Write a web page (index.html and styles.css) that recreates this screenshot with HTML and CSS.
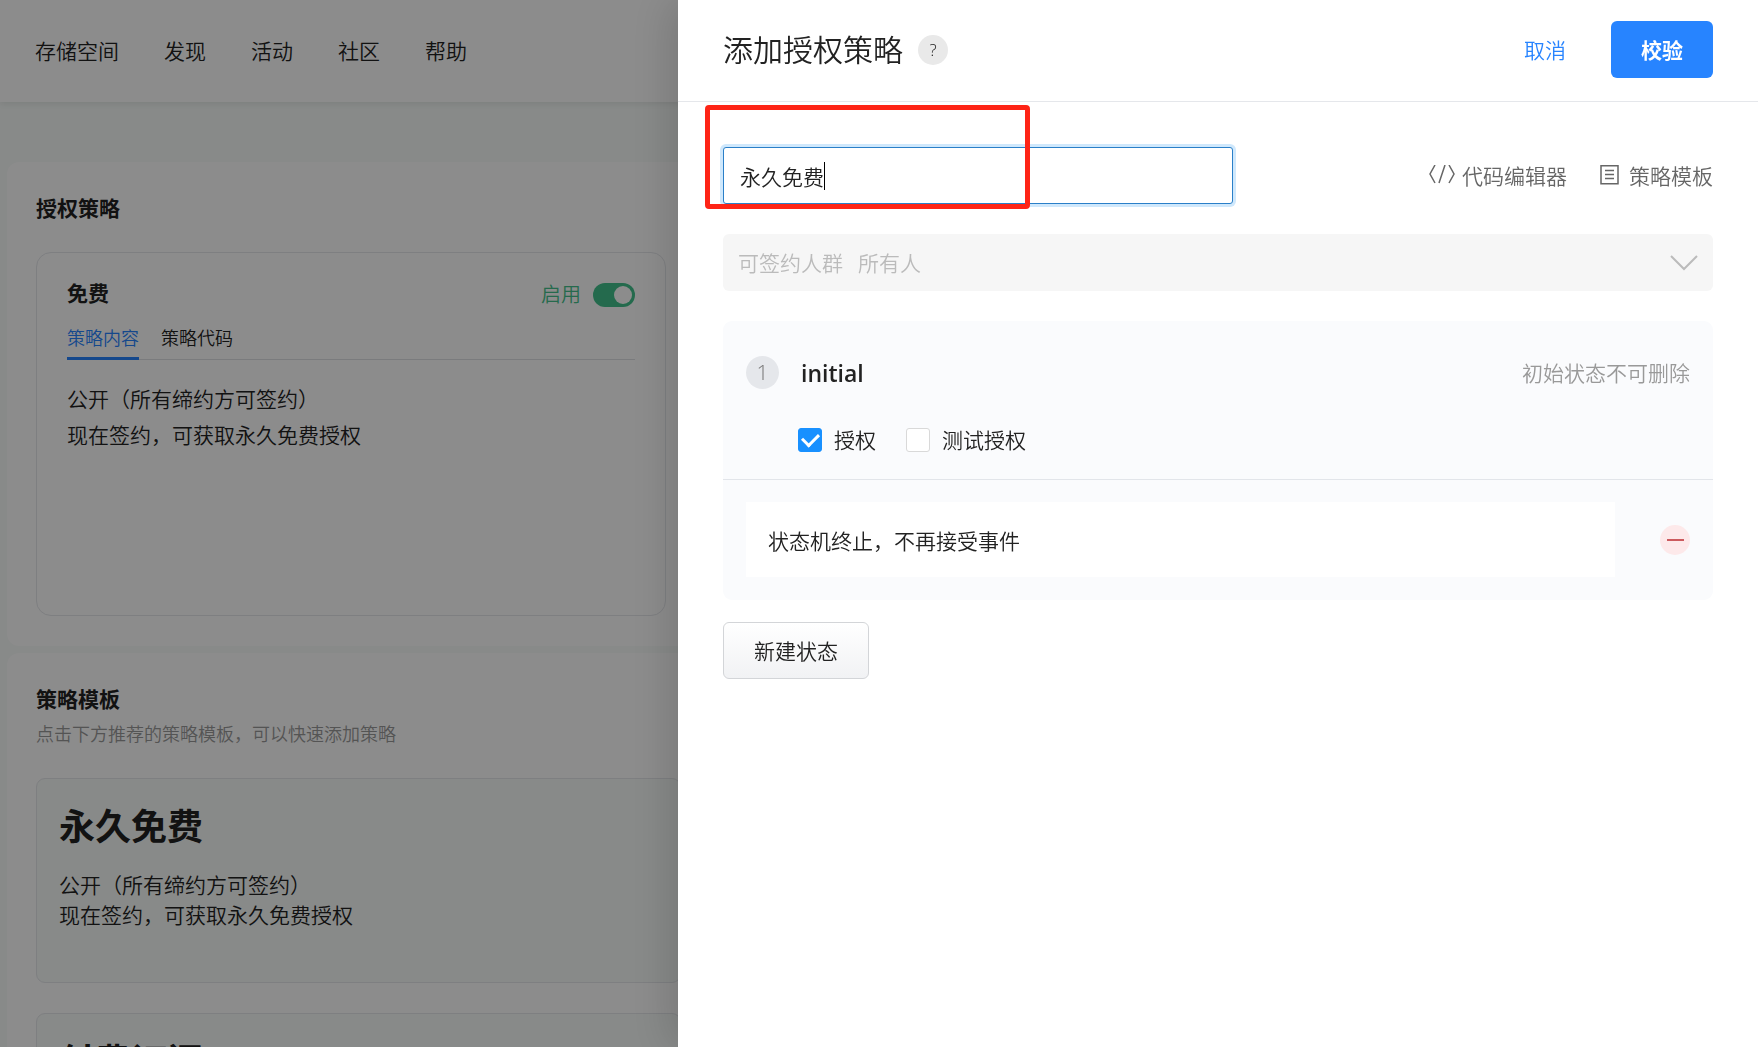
FILE: index.html
```html
<!DOCTYPE html>
<html lang="zh-CN">
<head>
<meta charset="utf-8">
<title>添加授权策略</title>
<link rel="stylesheet" href="styles.css">
</head>
<body>
<div class="page">
  <header class="topbar">
    <nav class="nav">
      <a href="#">存储空间</a>
      <a href="#">发现</a>
      <a href="#">活动</a>
      <a href="#">社区</a>
      <a href="#">帮助</a>
    </nav>
  </header>
  <main class="content">
    <section class="panel panel-policies">
      <h2 class="panel-title">授权策略</h2>
      <article class="policy">
        <div class="policy-head">
          <h3 class="policy-name">免费</h3>
          <label class="switch-label">启用<input class="switch" type="checkbox" role="switch" checked></label>
        </div>
        <div class="tabs">
          <button class="tab tab-active" type="button">策略内容</button>
          <button class="tab" type="button">策略代码</button>
        </div>
        <p class="policy-text">公开（所有缔约方可签约）<br>现在签约，可获取永久免费授权</p>
      </article>
    </section>
    <section class="panel panel-templates">
      <h2 class="panel-title">策略模板</h2>
      <p class="panel-hint">点击下方推荐的策略模板，可以快速添加策略</p>
      <article class="template">
        <h3 class="template-name">永久免费</h3>
        <p class="template-text">公开（所有缔约方可签约）<br>现在签约，可获取永久免费授权</p>
      </article>
      <article class="template">
        <h3 class="template-name">付费订阅</h3>
      </article>
    </section>
  </main>
</div>
<div class="mask"></div>
<aside class="drawer" role="dialog" aria-labelledby="drawer-title">
  <header class="drawer-head">
    <h1 class="drawer-title" id="drawer-title">添加授权策略</h1>
    <button class="help" type="button">?</button>
    <button class="link-button" type="button">取消</button>
    <button class="primary" type="button">校验</button>
  </header>
  <div class="drawer-body">
    <div class="name-row">
      <div class="name-field">
        <input class="name-input" type="text" value="永久免费" aria-label="策略名称" autofocus>
        <span class="caret"></span>
        <span class="highlight"></span>
      </div>
      <div class="tools">
        <button class="tool tool-code" type="button">
          <svg width="26" height="22" viewBox="0 0 26 22" fill="none" stroke="currentColor" stroke-width="1.5"><path d="M6 0 1 9l5 9M16 0l-6 18M20 0l5 9-5 9"/></svg>
          代码编辑器
        </button>
        <button class="tool tool-template" type="button">
          <svg width="20" height="22" viewBox="0 0 20 22" fill="none" stroke="currentColor" stroke-width="1.5"><path d="M1 .8h17v18H1zM5 5.5h9M5 9.5h9M5 13.5h9"/></svg>
          策略模板
        </button>
      </div>
    </div>
    <button class="audience" type="button" disabled>
      <span>可签约人群</span>
      <span>所有人</span>
      <svg class="chevron" width="28" height="16" viewBox="0 0 28 16" fill="none" stroke="currentColor" stroke-width="2"><path d="m1 1 13 13L27 1"/></svg>
    </button>
    <section class="state">
      <div class="state-top">
        <div class="state-head">
          <span class="state-index">1</span>
          <h2 class="state-name">initial</h2>
          <span class="state-note">初始状态不可删除</span>
        </div>
        <div class="checks">
          <label class="check"><input type="checkbox" checked>授权</label>
          <label class="check"><input type="checkbox">测试授权</label>
        </div>
      </div>
      <div class="state-bottom">
        <p class="event">状态机终止，不再接受事件</p>
        <button class="remove" type="button" aria-label="删除"></button>
      </div>
    </section>
    <button class="add-state" type="button">新建状态</button>
  </div>
</aside>
</body>
</html>
```
FILE: styles.css
```css
* {
  box-sizing: border-box;
}

body {
  margin: 0;
  height: 100vh;
  overflow: hidden;
  font: 21px/30px "Open Sans", "Noto Sans CJK SC", sans-serif;
  font-weight: 350;
  color: #222;
}

h1, h2, h3, p {
  margin: 0;
}

button, input {
  font: inherit;
  color: inherit;
}

button {
  padding: 0;
  border: 0;
  background: none;
}

.page {
  height: 100vh;
  overflow: hidden;
  background: #f7fbf9;
}

.topbar {
  position: relative;
  display: flex;
  align-items: center;
  height: 102px;
  padding: 0 35px;
  background: #fff;
  box-shadow: 0 2px 6px rgba(0, 0, 0, .08);
}

.nav {
  display: flex;
  gap: 45px;
}

.nav a {
  color: inherit;
  text-decoration: none;
}

.content {
  display: flex;
  flex-direction: column;
  gap: 7px;
  padding: 60px 0 0 7px;
}

.panel {
  padding: 31px 29px 30px;
  border-radius: 12px;
  background: #fff;
}

.panel-title {
  font-size: 21px;
  font-weight: 700;
}

.policy {
  width: 630px;
  height: 364px;
  margin-top: 29px;
  padding: 25px 30px;
  border: 1px solid #e5e7eb;
  border-radius: 15px;
}

.policy-head {
  display: flex;
  justify-content: space-between;
  align-items: flex-end;
  height: 32px;
}

.policy-name {
  align-self: flex-start;
  font-size: 21px;
  font-weight: 700;
}

.switch-label {
  display: flex;
  align-items: center;
  gap: 12px;
  font-size: 20px;
  color: #44c28c;
}

.switch {
  appearance: none;
  display: flex;
  justify-content: flex-end;
  width: 42px;
  height: 24px;
  margin: 0;
  padding: 3px;
  border-radius: 12px;
  background: #42c28c;
}

.switch::before {
  content: "";
  width: 18px;
  height: 18px;
  border-radius: 50%;
  background: #fff;
}

.tabs {
  display: flex;
  gap: 22px;
  height: 50px;
  border-bottom: 1px solid #dfe1e4;
}

.tab {
  height: 50px;
  padding-top: 8px;
  border-bottom: 3px solid transparent;
  font-size: 18px;
}

.tab-active {
  border-color: #2784ff;
  color: #2784ff;
}

.policy-text {
  margin-top: 21px;
  line-height: 36px;
}

.panel-hint {
  margin-top: 5px;
  font-size: 18px;
  color: #999;
}

.template {
  width: 645px;
  height: 205px;
  margin-top: 29px;
  padding: 23px 22px;
  border: 1px solid #e5e7eb;
  border-radius: 9px;
  background: #f7fbf9;
}

.template + .template {
  margin-top: 30px;
}

.template-name {
  font-size: 36px;
  line-height: 50px;
  font-weight: 700;
}

.template-text {
  margin-top: 18px;
}

.mask {
  position: fixed;
  inset: 0;
  background: rgba(0, 0, 0, .45);
}

.drawer {
  position: fixed;
  inset: 0 0 0 auto;
  width: 1080px;
  max-width: 100%;
  background: #fff;
  box-shadow: -9px 0 40px rgba(0, 0, 0, .15);
}

.drawer-head {
  display: flex;
  align-items: center;
  height: 102px;
  padding: 0 45px 2px;
  border-bottom: 1px solid #e5e7eb;
}

.drawer-title {
  font-size: 30px;
  font-weight: inherit;
  line-height: 40px;
}

.help {
  width: 30px;
  height: 30px;
  margin: 0 auto 0 15px;
  border-radius: 50%;
  background: #e9e9e9;
  font-size: 17px;
  line-height: 30px;
}

.link-button {
  margin-right: 45px;
  color: #2784ff;
}

.primary {
  height: 57px;
  padding: 0 30px;
  border-radius: 6px;
  background: #2784ff;
  color: #fff;
  font-weight: 700;
}

.drawer-body {
  padding: 45px;
}

.name-row {
  display: flex;
  justify-content: space-between;
  align-items: center;
}

.name-field {
  position: relative;
}

.name-input {
  display: block;
  width: 510px;
  height: 57px;
  padding: 0 16px;
  border: 1px solid #2a7fc8;
  border-radius: 3px;
  outline: 0;
  box-shadow: 0 0 0 3px #cfe8fc;
  caret-color: transparent;
}

.caret {
  position: absolute;
  top: 15px;
  left: 101px;
  width: 1px;
  height: 28px;
  background: #000;
}

.highlight {
  position: absolute;
  top: -42px;
  left: -18px;
  width: 325px;
  height: 104px;
  border: 5px solid #fe2416;
  border-radius: 4px;
}

.tools {
  display: flex;
  gap: 33px;
  color: #666;
}

.tool {
  display: flex;
  align-items: center;
}

.tool-code {
  gap: 7px;
}

.tool-template {
  gap: 9px;
}

.audience {
  display: flex;
  align-items: center;
  gap: 15px;
  width: 100%;
  height: 57px;
  margin-top: 30px;
  padding: 0 15px;
  border-radius: 6px;
  background: #f6f6f6;
  color: #bbb;
}

.chevron {
  margin-left: auto;
}

.state {
  margin-top: 30px;
  border-radius: 9px;
  background: #fafbfd;
}

.state-top {
  padding: 35px 23px 24px;
  border-bottom: 1px solid #e2e5ea;
}

.state-head {
  display: flex;
  align-items: center;
}

.state-index {
  width: 33px;
  height: 33px;
  border-radius: 50%;
  background: #e5e7eb;
  color: #777;
  line-height: 33px;
  text-align: center;
}

.state-name {
  margin-left: 22px;
  font-size: 23px;
  font-weight: 600;
}

.state-note {
  margin-left: auto;
  color: #999;
}

.checks {
  display: flex;
  gap: 30px;
  margin-top: 36px;
  padding-left: 52px;
}

.check {
  display: flex;
  align-items: center;
  gap: 12px;
}

.check input {
  appearance: none;
  display: grid;
  place-items: center;
  width: 24px;
  height: 24px;
  margin: 0;
  border: 1px solid #d9d9d9;
  border-radius: 3px;
  background: #fff;
}

.check input:checked {
  border-color: #1890ff;
  background: #1890ff;
}

.check input:checked::before {
  content: "";
  width: 8px;
  height: 13px;
  margin-bottom: 4px;
  border: solid #fff;
  border-width: 0 3px 3px 0;
  transform: rotate(45deg);
}

.state-bottom {
  display: flex;
  justify-content: space-between;
  align-items: center;
  gap: 45px;
  padding: 22px 23px 23px;
}

.event {
  flex: 1;
  padding: 24px 22px 21px;
  background: #fff;
}

.remove {
  display: grid;
  place-items: center;
  width: 30px;
  height: 30px;
  border-radius: 50%;
  background: #fde9ea;
}

.remove::before {
  content: "";
  width: 17px;
  height: 2px;
  background: #cc5a5e;
}

.add-state {
  height: 57px;
  margin-top: 22px;
  padding: 0 30px;
  border: 1px solid #d3d5d8;
  border-radius: 6px;
  background: linear-gradient(#fff, #f1f2f4);
}
```
